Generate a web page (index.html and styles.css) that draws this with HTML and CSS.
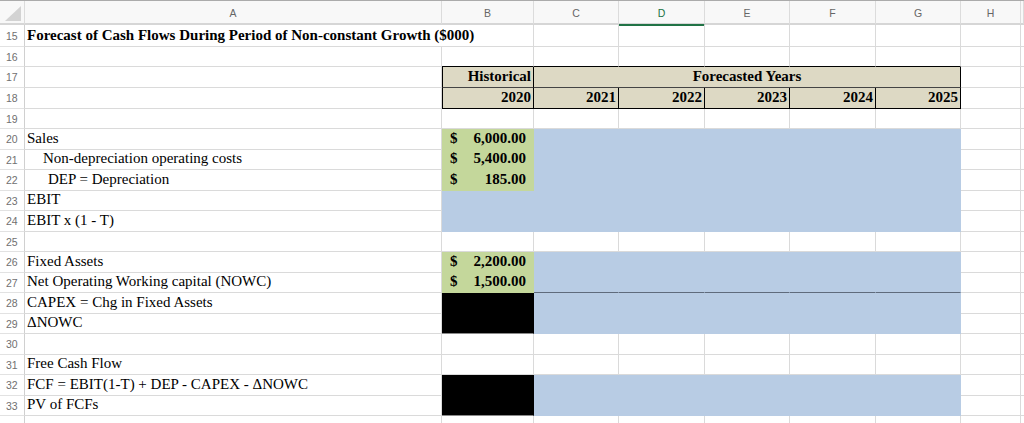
FILE: index.html
```html
<!DOCTYPE html>
<html>
<head>
<meta charset="utf-8">
<link rel="stylesheet" href="styles.css">
</head>
<body>
<div class="sheet">
  <div class="row colhead">
    <div class="ch corner"><svg width="24" height="24" viewBox="0 0 24 24"><polygon points="21,6 21,21 5,21" fill="#d3d3d3"/></svg></div>
    <div class="ch">A</div><div class="ch">B</div><div class="ch">C</div><div class="ch sel">D</div><div class="ch">E</div><div class="ch">F</div><div class="ch">G</div><div class="ch">H</div><div class="ch"></div>
  </div>

  <div class="row h22">
    <div class="rh">15</div>
    <div class="c a title span2">Forecast of Cash Flows During Period of Non-constant Growth ($000)</div>
    <div class="c"></div><div class="c"></div><div class="c"></div><div class="c"></div><div class="c"></div><div class="c"></div><div class="c"></div>
  </div>

  <div class="row h20">
    <div class="rh">16</div>
    <div class="c"></div><div class="c bt"></div><div class="c bt"></div><div class="c bt"></div><div class="c bt"></div><div class="c bt"></div><div class="c bt"></div><div class="c"></div><div class="c"></div>
  </div>

  <div class="row h21">
    <div class="rh">17</div>
    <div class="c"></div>
    <div class="c hd hd1 bl right">Historical</div>
    <div class="c hd hd1 span5 center">Forecasted Years</div>
    <div class="c"></div><div class="c"></div>
  </div>

  <div class="row h21">
    <div class="rh">18</div>
    <div class="c"></div>
    <div class="c hd hd2 bl right">2020</div>
    <div class="c hd hd2 right">2021</div>
    <div class="c hd hd2 right">2022</div>
    <div class="c hd hd2 right">2023</div>
    <div class="c hd hd2 right">2024</div>
    <div class="c hd hd2 right">2025</div>
    <div class="c"></div><div class="c"></div>
  </div>

  <div class="row h20">
    <div class="rh">19</div>
    <div class="c"></div><div class="c"></div><div class="c"></div><div class="c"></div><div class="c"></div><div class="c"></div><div class="c"></div><div class="c"></div><div class="c"></div>
  </div>

  <div class="row h21">
    <div class="rh">20</div>
    <div class="c a">Sales</div>
    <div class="c grn acct"><span>$</span><span>6,000.00</span></div>
    <div class="c blu"></div><div class="c blu"></div><div class="c blu"></div><div class="c blu"></div><div class="c blu"></div>
    <div class="c"></div><div class="c"></div>
  </div>

  <div class="row h20">
    <div class="rh">21</div>
    <div class="c a ind1">Non-depreciation operating costs</div>
    <div class="c grn acct"><span>$</span><span>5,400.00</span></div>
    <div class="c blu"></div><div class="c blu"></div><div class="c blu"></div><div class="c blu"></div><div class="c blu"></div>
    <div class="c"></div><div class="c"></div>
  </div>

  <div class="row h21">
    <div class="rh">22</div>
    <div class="c a ind2">DEP = Depreciation</div>
    <div class="c grn acct"><span>$</span><span>185.00</span></div>
    <div class="c blu"></div><div class="c blu"></div><div class="c blu"></div><div class="c blu"></div><div class="c blu"></div>
    <div class="c"></div><div class="c"></div>
  </div>

  <div class="row h20">
    <div class="rh">23</div>
    <div class="c a">EBIT</div>
    <div class="c blu"></div><div class="c blu"></div><div class="c blu"></div><div class="c blu"></div><div class="c blu"></div><div class="c blu"></div>
    <div class="c"></div><div class="c"></div>
  </div>

  <div class="row h21">
    <div class="rh">24</div>
    <div class="c a">EBIT x (1 - T)</div>
    <div class="c blu"></div><div class="c blu"></div><div class="c blu"></div><div class="c blu"></div><div class="c blu"></div><div class="c blu"></div>
    <div class="c"></div><div class="c"></div>
  </div>

  <div class="row h20">
    <div class="rh">25</div>
    <div class="c"></div><div class="c"></div><div class="c"></div><div class="c"></div><div class="c"></div><div class="c"></div><div class="c"></div><div class="c"></div><div class="c"></div>
  </div>

  <div class="row h21">
    <div class="rh">26</div>
    <div class="c a">Fixed Assets</div>
    <div class="c grn acct"><span>$</span><span>2,200.00</span></div>
    <div class="c blu"></div><div class="c blu"></div><div class="c blu"></div><div class="c blu"></div><div class="c blu"></div>
    <div class="c"></div><div class="c"></div>
  </div>

  <div class="row h20">
    <div class="rh">27</div>
    <div class="c a">Net Operating Working capital (NOWC)</div>
    <div class="c grn acct"><span>$</span><span>1,500.00</span></div>
    <div class="c blu dk"></div><div class="c blu dk"></div><div class="c blu dk"></div><div class="c blu dk"></div><div class="c blu dk"></div>
    <div class="c"></div><div class="c"></div>
  </div>

  <div class="row h21">
    <div class="rh">28</div>
    <div class="c a">CAPEX = Chg in Fixed Assets</div>
    <div class="c blk"></div>
    <div class="c blu"></div><div class="c blu"></div><div class="c blu"></div><div class="c blu"></div><div class="c blu"></div>
    <div class="c"></div><div class="c"></div>
  </div>

  <div class="row h20">
    <div class="rh">29</div>
    <div class="c a">&Delta;NOWC</div>
    <div class="c blk last"></div>
    <div class="c blu"></div><div class="c blu"></div><div class="c blu"></div><div class="c blu"></div><div class="c blu"></div>
    <div class="c"></div><div class="c"></div>
  </div>

  <div class="row h21">
    <div class="rh">30</div>
    <div class="c"></div><div class="c"></div><div class="c"></div><div class="c"></div><div class="c"></div><div class="c"></div><div class="c"></div><div class="c"></div><div class="c"></div>
  </div>

  <div class="row h20">
    <div class="rh">31</div>
    <div class="c a">Free Cash Flow</div>
    <div class="c"></div><div class="c"></div><div class="c"></div><div class="c"></div><div class="c"></div><div class="c"></div><div class="c"></div><div class="c"></div>
  </div>

  <div class="row h21">
    <div class="rh">32</div>
    <div class="c a">FCF = EBIT(1-T) + DEP - CAPEX - &Delta;NOWC</div>
    <div class="c blk"></div>
    <div class="c blu"></div><div class="c blu"></div><div class="c blu"></div><div class="c blu"></div><div class="c blu"></div>
    <div class="c"></div><div class="c"></div>
  </div>

  <div class="row h20">
    <div class="rh">33</div>
    <div class="c a">PV of FCFs</div>
    <div class="c blk last"></div>
    <div class="c blu"></div><div class="c blu"></div><div class="c blu"></div><div class="c blu"></div><div class="c blu"></div>
    <div class="c"></div><div class="c"></div>
  </div>

  <div class="row h20">
    <div class="rh"></div>
    <div class="c"></div><div class="c"></div><div class="c"></div><div class="c"></div><div class="c"></div><div class="c"></div><div class="c"></div><div class="c"></div><div class="c"></div>
  </div>
</div>
</body>
</html>
```

FILE: styles.css
```css
* { box-sizing: border-box; }
html, body {
  margin: 0;
  padding: 0;
  background: #fff;
  overflow: hidden;
  height: 423px;
}
.sheet {
  width: 1024px;
  font-family: "Liberation Serif", "Times New Roman", serif;
  font-size: 15px;
  line-height: 17px;
  color: #000;
}
.row {
  display: grid;
  grid-template-columns: 25px 417px 92px 85px 86px 85px 86px 85px 60px 1fr;
}
.h20 { height: 20px; }
.h21 { height: 21px; }
.h22 { height: 22px; }

.colhead {
  height: 25px;
  border-top: 1px solid #ababab;
  border-bottom: 2px solid #d6d6d6;
  background: #f8f8f8;
}
.ch {
  display: flex;
  align-items: center;
  justify-content: center;
  font-family: "Liberation Sans", Arial, sans-serif;
  font-size: 10.5px;
  line-height: 12px;
  color: #666;
  border-right: 1px solid #dcdcdc;
}
.ch.corner {
  justify-content: flex-start;
  align-items: flex-start;
}
.ch.corner svg { display: block; margin-top: -1px; }
.ch.sel {
  color: #217346;
  border-bottom: 2px solid #217346;
  margin-bottom: -2px;
}

.rh {
  display: flex;
  align-items: center;
  padding-left: 6px;
  font-family: "Liberation Sans", Arial, sans-serif;
  font-size: 10.5px;
  line-height: 12px;
  color: #707070;
  border-right: 1px solid #d0d0d0;
  border-bottom: 1px solid #e2e2e2;
  background: #fff;
}

.c {
  display: flex;
  align-items: flex-end;
  padding: 0 2px 2px 2px;
  border-right: 1px solid #dadada;
  border-bottom: 1px solid #dadada;
  white-space: nowrap;
  min-width: 0;
}
.a { padding-left: 2px; }
.ind1 { padding-left: 18px; }
.ind2 { padding-left: 23px; }
.title { font-weight: bold; }
.span2 { grid-column: span 2; }
.span5 { grid-column: span 5; }
.center { justify-content: center; }
.right { justify-content: flex-end; }

.bt { border-bottom-color: #000; }
.hd {
  background: #ddd9c4;
  font-weight: bold;
  border-right-color: #000;
}
.hd1 { border-bottom-color: #444; }
.hd2 { border-bottom-color: #000; }
.bl { border-left: 1px solid #000; }

.grn { background: #c4d79b; border-right-color: #c4d79b; border-bottom-color: #c4d79b; }
.blu { background: #b8cce4; border-right-color: #b8cce4; border-bottom-color: #b8cce4; }
.blu.dk { border-bottom-color: #5f6b7c; }
.blk { background: #000; border-right-color: #000; border-bottom-color: #000; }
.blk.last { border-bottom-color: #8a8a8a; }

.acct {
  justify-content: space-between;
  font-weight: bold;
  padding-left: 8px;
  padding-right: 7px;
}
```
